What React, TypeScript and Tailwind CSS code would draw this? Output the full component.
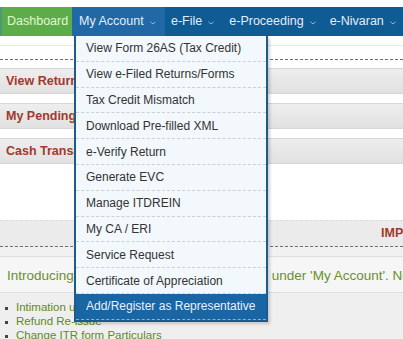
import React from 'react';

const menuItems = [
    'View Form 26AS (Tax Credit)',
    'View e-Filed Returns/Forms',
    'Tax Credit Mismatch',
    'Download Pre-filled XML',
    'e-Verify Return',
    'Generate EVC',
    'Manage ITDREIN',
    'My CA / ERI',
    'Service Request',
    'Certificate of Appreciation',
];

const quickLinks = ['View Returns / Forms', 'My Pending Actions', 'Cash Transaction Details'];

const updates = ['Intimation u/s 143(1)', 'Refund Re-issue', 'Change ITR form Particulars'];

function Caret() {
    return (
        <svg width="6" height="4" viewBox="0 0 6 4" className="shrink-0 ml-[6px] mt-[3px]">
            <path d="M0.5 0.8 L3 3 L5.5 0.8" fill="none" stroke="#9db4ca" strokeWidth="1" />
        </svg>
    );
}

function NavItem({ label, className }: { label: string; className?: string }) {
    return (
        <div className={`flex shrink-0 items-center whitespace-nowrap text-[12.5px] text-[#e4edf7] ${className ?? ''}`}>
            {label}
            <Caret />
        </div>
    );
}

export default function App() {
    return (
        <div className="relative w-[403px] h-[339px] overflow-hidden bg-white font-['Liberation_Sans',Arial,sans-serif]">
            <div className="h-[7px] bg-white" />

            {/* top navigation */}
            <nav className="relative z-10 flex h-[29px] bg-[#0f5b94] whitespace-nowrap">
                <div className="flex shrink-0 items-center w-[72px] pl-[5px] bg-[#5cad4a] border-l-2 border-[#4a9a72] text-[12.5px] text-[#e3f6d3]">
                    Dashboard
                </div>
                <div className="relative flex shrink-0 w-[93px] bg-[#2169a6]">
                    <NavItem label="My Account" className="pl-[7px]" />
                    <div className="absolute left-[2px] top-full w-[194px] bg-[#f2f8fc] border-x-2 border-b-2 border-[#1b5b8d] shadow-[2px_2px_3px_rgba(0,0,0,0.18)]">
                        {menuItems.map((item) => (
                            <div
                                key={item}
                                className="flex items-center h-[25.8px] pl-[10px] border-b border-dashed border-[#c9cfd4] text-[12px] text-[#333]"
                            >
                                {item}
                            </div>
                        ))}
                        <div className="flex items-center h-[25.8px] pl-[10px] bg-[#1a65a3] border-b border-dashed border-[#8fb2d2] text-[12px] text-[#e8f1fa]">
                            Add/Register as Representative
                        </div>
                    </div>
                </div>
                <NavItem label="e-File" className="pl-[6px] pr-[15px]" />
                <NavItem label="e-Proceeding" className="pr-[14px]" />
                <NavItem label="e-Nivaran" />
            </nav>

            {/* page content */}
            <div className="h-[9px]" />
            <div className="border-t border-[#efe9dc]" />
            <div className="h-[14px] border-b border-dashed border-[#6f6f6f]" />

            <div className="flex flex-col gap-[9px] mt-[8px]">
                {quickLinks.map((link) => (
                    <div
                        key={link}
                        className="flex items-center h-[26px] pl-[6px] bg-gradient-to-b from-[#eeeeee] to-[#e1e1e1] border-y border-[#d6d6d6] text-[12.5px] font-bold text-[#a3392b] whitespace-nowrap"
                    >
                        {link}
                    </div>
                ))}
            </div>

            <div className="mt-[56px] bg-[#efefef]">
                <div className="flex items-center h-[27px] pl-[381px] bg-[#ebebeb] border-t border-[#dcdcdc] border-b border-b-[#6f6f6f] border-dashed text-[12.5px] font-bold text-[#a3392b] whitespace-nowrap overflow-hidden">
                    IMPORTANT UPDATES
                </div>
                <div className="h-[9px] bg-[#f1f1f1]" />
                <div className="flex items-center h-[37px] pl-[7px] pt-[3px] bg-[#f6f6f6] border-y border-[#dedede] text-[13.5px] text-[#6a8f2c] whitespace-nowrap overflow-hidden">
                    Introducing the 'Register as Representative' under 'My Account'. New service for taxpayers
                </div>
                <ul className="pt-[8px] pb-[10px]">
                    {updates.map((u) => (
                        <li key={u} className="flex items-center h-[14px] text-[11.5px] text-[#5f8a22] whitespace-nowrap">
                            <span className="w-[3px] h-[3px] ml-[5px] mr-[8px] bg-[#3f4a33]" />
                            {u}
                        </li>
                    ))}
                </ul>
            </div>
        </div>
    );
}
